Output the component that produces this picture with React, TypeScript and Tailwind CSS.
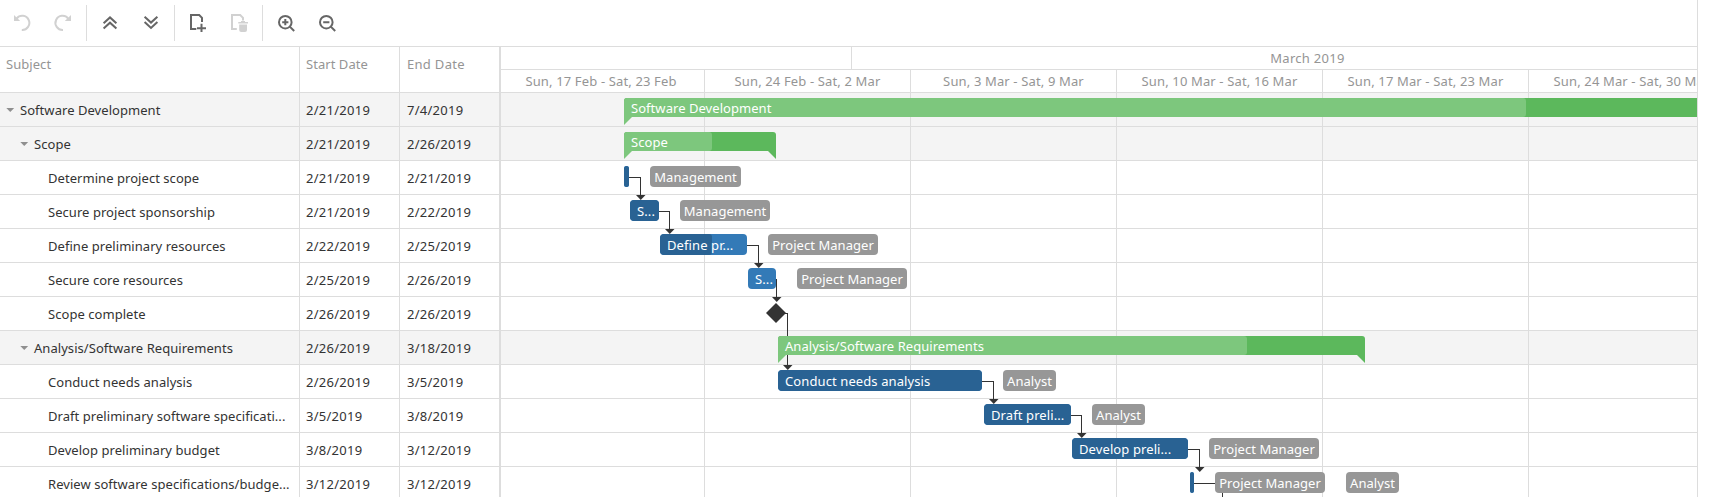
import type { ReactNode } from "react";

type Row = { name: string; start: string; end: string; level: number };

const rows: Row[] = [
  { name: "Software Development", start: "2/21/2019", end: "7/4/2019", level: 0 },
  { name: "Scope", start: "2/21/2019", end: "2/26/2019", level: 1 },
  { name: "Determine project scope", start: "2/21/2019", end: "2/21/2019", level: 2 },
  { name: "Secure project sponsorship", start: "2/21/2019", end: "2/22/2019", level: 2 },
  { name: "Define preliminary resources", start: "2/22/2019", end: "2/25/2019", level: 2 },
  { name: "Secure core resources", start: "2/25/2019", end: "2/26/2019", level: 2 },
  { name: "Scope complete", start: "2/26/2019", end: "2/26/2019", level: 2 },
  { name: "Analysis/Software Requirements", start: "2/26/2019", end: "3/18/2019", level: 1 },
  { name: "Conduct needs analysis", start: "2/26/2019", end: "3/5/2019", level: 2 },
  { name: "Draft preliminary software specificati...", start: "3/5/2019", end: "3/8/2019", level: 2 },
  { name: "Develop preliminary budget", start: "3/8/2019", end: "3/12/2019", level: 2 },
  { name: "Review software specifications/budge...", start: "3/12/2019", end: "3/12/2019", level: 2 },
];

const weeks = [
  "Sun, 17 Feb - Sat, 23 Feb",
  "Sun, 24 Feb - Sat, 2 Mar",
  "Sun, 3 Mar - Sat, 9 Mar",
  "Sun, 10 Mar - Sat, 16 Mar",
  "Sun, 17 Mar - Sat, 23 Mar",
  "Sun, 24 Mar - Sat, 30 Mar",
];

// x positions are measured from the left edge of the timeline
type Summary = { row: number; x: number; w: number; done: number; title: string };
const summaries: Summary[] = [
  { row: 0, x: 123, w: 1400, done: 902, title: "Software Development" },
  { row: 1, x: 123, w: 152, done: 88, title: "Scope" },
  { row: 7, x: 277, w: 587, done: 469, title: "Analysis/Software Requirements" },
];

type Task = { row: number; x: number; w: number; done: number; title?: string };
const tasks: Task[] = [
  { row: 2, x: 123, w: 5, done: 5 },
  { row: 3, x: 129, w: 29, done: 29, title: "S..." },
  { row: 4, x: 159, w: 87, done: 52, title: "Define pr..." },
  { row: 5, x: 247, w: 28, done: 0, title: "S..." },
  { row: 8, x: 277, w: 204, done: 204, title: "Conduct needs analysis" },
  { row: 9, x: 483, w: 87, done: 87, title: "Draft preli..." },
  { row: 10, x: 571, w: 116, done: 116, title: "Develop preli..." },
  { row: 11, x: 689, w: 4, done: 4 },
];

type Resource = { row: number; x: number; w: number; name: string };
const resources: Resource[] = [
  { row: 2, x: 149, w: 91, name: "Management" },
  { row: 3, x: 179, w: 90, name: "Management" },
  { row: 4, x: 267, w: 110, name: "Project Manager" },
  { row: 5, x: 296, w: 110, name: "Project Manager" },
  { row: 8, x: 502, w: 53, name: "Analyst" },
  { row: 9, x: 591, w: 53, name: "Analyst" },
  { row: 10, x: 708, w: 110, name: "Project Manager" },
  { row: 11, x: 714, w: 110, name: "Project Manager" },
  { row: 11, x: 845, w: 53, name: "Analyst" },
];

type Link = { row: number; from: number; to: number; rows: number };
const links: Link[] = [
  { row: 2, from: 128, to: 139, rows: 1 },
  { row: 3, from: 158, to: 168, rows: 1 },
  { row: 4, from: 246, to: 257, rows: 1 },
  { row: 5, from: 275, to: 275, rows: 1 },
  { row: 6, from: 284, to: 286, rows: 2 },
  { row: 8, from: 481, to: 492, rows: 1 },
  { row: 9, from: 570, to: 580, rows: 1 },
  { row: 10, from: 687, to: 698, rows: 1 },
];

function ToolButton({ children, disabled, label }: { children: ReactNode; disabled?: boolean; label: string }) {
  return (
    <button
      aria-label={label}
      disabled={disabled}
      className={`flex h-full w-[41px] items-start justify-center pt-[14px] ${disabled ? "text-[#d1d1d1]" : "text-[#666666]"}`}
    >
      <svg width="19" height="19" viewBox="0 0 19 19" fill="none" stroke="currentColor" strokeWidth="2">
        {children}
      </svg>
    </button>
  );
}

function Separator() {
  return <div className="mr-[2px] ml-[3px] h-9 w-px bg-[#dddddd]" />;
}

function Toolbar() {
  return (
    <div className="flex h-[47px] items-stretch border-b border-[#dddddd] pl-px">
      <ToolButton label="Undo" disabled>
        <path d="M4.6 4.6A7.1 7.1 0 1 1 9.8 16" />
        <path d="M2 1V7H8.2Z" fill="currentColor" stroke="none" />
      </ToolButton>
      <ToolButton label="Redo" disabled>
        <path d="M15.2 4.6A7.1 7.1 0 1 0 10 16" />
        <path d="M18 1V7H11.8Z" fill="currentColor" stroke="none" />
      </ToolButton>
      <div className="flex pt-[5px]"><Separator /></div>
      <ToolButton label="Collapse all">
        <path d="M3.6 9.3L10 3.4L16.4 9.3M3.6 14.6L10 8.7L16.4 14.6" />
      </ToolButton>
      <ToolButton label="Expand all">
        <path d="M3.6 2.7L10 8.6L16.4 2.7M3.6 8L10 13.9L16.4 8" />
      </ToolButton>
      <div className="flex pt-[5px]"><Separator /></div>
      <ToolButton label="Add task">
        <path d="M8.3 15H3V1H11.2L14 3.8V8M9 14.2H18M13.5 9.8V18" />
      </ToolButton>
      <ToolButton label="Delete task" disabled>
        <path d="M7.8 15H3V1H11.2L14 3.8V6.5" />
        <path d="M9.3 8H12V7H16V8H19V9.6H9.3ZM10.2 10.6H18V16Q18 18 16 18H12.2Q10.2 18 10.2 16Z" fill="currentColor" stroke="none" />
      </ToolButton>
      <div className="flex pt-[5px]"><Separator /></div>
      <ToolButton label="Zoom in">
        <circle cx="9.3" cy="8.2" r="6.3" />
        <path d="M13.8 12.6L18.2 17M6.2 8.2H12.4M9.3 5.1V11.3" />
      </ToolButton>
      <ToolButton label="Zoom out">
        <circle cx="9.3" cy="8.2" r="6.3" />
        <path d="M13.8 12.6L18.2 17M6.2 8.2H12.4" />
      </ToolButton>
    </div>
  );
}

function TaskRow({ row }: { row: Row }) {
  const parent = row.level < 2;
  const indent = ["pl-[6px]", "pl-5", "pl-12"][row.level];
  return (
    <div className={`flex h-[34px] shrink-0 border-b border-[#dddddd] leading-[34px] ${parent ? "bg-[#f4f4f4]" : ""}`}>
      <div className={`flex w-[300px] items-start border-r border-[#dddddd] ${indent}`}>
        {parent && (
          <svg width="14" height="33" viewBox="0 0 14 33" className="shrink-0">
            <path d="M0.3 15H8.2L4.25 19Z" fill="#8f8f8f" />
          </svg>
        )}
        <span>{row.name}</span>
      </div>
      <div className="w-[100px] border-r border-[#dddddd] pl-[6px] tracking-[0.27px]">{row.start}</div>
      <div className="w-[99px] pl-[7px] tracking-[0.27px]">{row.end}</div>
    </div>
  );
}

function TaskList() {
  return (
    <div className="flex w-[499px] shrink-0 flex-col overflow-hidden">
      <div className="flex h-[46px] shrink-0 border-b border-[#dddddd] text-[#959595]">
        <div className="w-[300px] border-r border-[#dddddd] pt-[6px] pl-[6px] leading-[23px]">Subject</div>
        <div className="w-[100px] border-r border-[#dddddd] pt-[6px] pl-[6px] leading-[23px]">Start Date</div>
        <div className="w-[99px] pt-[6px] pl-[7px] leading-[23px] tracking-[0.3px]">End Date</div>
      </div>
      {rows.map((r) => (
        <TaskRow key={r.name} row={r} />
      ))}
    </div>
  );
}

function Links() {
  return (
    <svg className="absolute top-0 left-0" width="1196" height="408" viewBox="0 0 1196 408" shapeRendering="crispEdges">
      {links.map((l) => {
        const y = l.row * 34 + 16;
        const end = y + l.rows * 34 - 16;
        return (
          <g key={l.row}>
            <path d={`M${l.from} ${y + 0.5}H${l.to + 0.5}V${end}`} fill="none" stroke="#333333" />
            <path d={`M${l.to - 4} ${end}H${l.to + 5.5}L${l.to + 0.75} ${end + 5}Z`} fill="#333333" shapeRendering="auto" />
          </g>
        );
      })}
      <path d="M693 390.5H721.5V408" fill="none" stroke="#333333" />
      <path d="M275 210L285 220L275 230L265 220Z" fill="#333333" shapeRendering="auto" />
    </svg>
  );
}

function Timeline() {
  return (
    <div className="flex min-w-0 flex-1 flex-col overflow-hidden">
      <div className="flex h-[23px] shrink-0 border-b border-[#dddddd] leading-[23px] text-[#959595]">
        <div className="w-[351px] shrink-0 border-r border-[#dddddd]" />
        <div className="w-[911px] shrink-0 text-center tracking-[0.28px]">March 2019</div>
      </div>
      <div className="flex h-[23px] shrink-0 border-b border-[#dddddd] leading-[23px] tracking-[0.14px] text-[#959595]">
        {weeks.map((w, i) => (
          <div
            key={w}
            className={`shrink-0 border-r border-[#dddddd] text-center whitespace-nowrap ${i === 0 ? "w-[204px] pr-[3px]" : "w-[206px]"}`}
          >
            {w}
          </div>
        ))}
      </div>
      <div className="relative shrink-0">
        {rows.map((r) => (
          <div key={r.name} className={`flex h-[34px] border-b border-[#dddddd] ${r.level < 2 ? "bg-[#f4f4f4]" : ""}`}>
            {weeks.map((w, i) => (
              <div key={w} className={`shrink-0 border-r border-[#dddddd] ${i === 0 ? "w-[204px]" : "w-[206px]"}`} />
            ))}
          </div>
        ))}
        <Links />
        {summaries.map((s) => (
          <div key={s.title} className="absolute h-[19px] rounded-t-[3px] bg-[#5cb85c]" style={{ left: s.x, top: s.row * 34 + 5, width: s.w }}>
            <div className="h-[19px] rounded-[3px] rounded-bl-none bg-[#7dc77d]" style={{ width: s.done }} />
            <svg className="absolute top-[19px] left-0" width="8" height="8">
              <path d="M0 0H8L0 8Z" fill="#7dc77d" />
            </svg>
            <svg className="absolute top-[19px] right-0" width="8" height="8">
              <path d="M0 0H8V8Z" fill="#5cb85c" />
            </svg>
            <span className="absolute top-0 left-[7px] leading-[20px] whitespace-nowrap text-white">{s.title}</span>
          </div>
        ))}
        {tasks.map((t) => (
          <div
            key={t.row}
            className={`absolute h-[21px] overflow-hidden bg-[#337ab7] ${t.w < 10 ? "rounded-[2px]" : "rounded-[4px]"}`}
            style={{ left: t.x, top: t.row * 34 + 5, width: t.w }}
          >
            <div className="h-full rounded-[3px] bg-[#296293]" style={{ width: t.done }} />
            {t.title && (
              <span className="absolute top-0 left-[7px] leading-[22px] tracking-[0.1px] whitespace-nowrap text-white">{t.title}</span>
            )}
          </div>
        ))}
        {resources.map((r) => (
          <div
            key={r.x}
            className="absolute h-[21px] rounded-[4px] bg-[#979797] text-center leading-[22px] whitespace-nowrap text-white"
            style={{ left: r.x, top: r.row * 34 + 5, width: r.w }}
          >
            {r.name}
          </div>
        ))}
      </div>
    </div>
  );
}

export default function App() {
  return (
    <div className="h-[497px] w-[1713px] overflow-hidden bg-white font-['Noto_Sans','Open_Sans',sans-serif] text-[13px] tracking-[0.05px] text-[#333333]">
      <div className="flex h-full w-[1698px] flex-col border-r border-[#dddddd]">
        <Toolbar />
        <div className="flex min-h-0 flex-1">
          <TaskList />
          <div className="w-[2px] shrink-0 bg-[#dddddd]" />
          <Timeline />
        </div>
      </div>
    </div>
  );
}
